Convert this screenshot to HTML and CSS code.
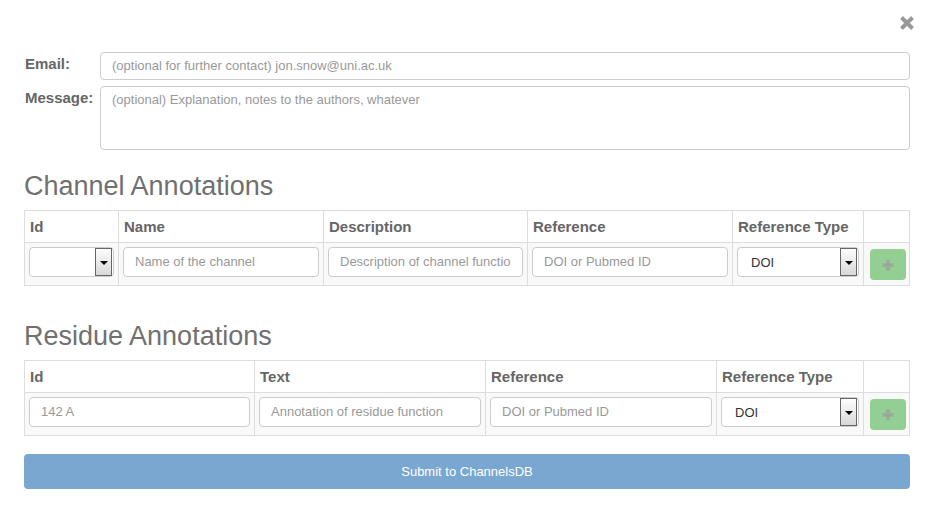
FILE: index.html
```html
<!DOCTYPE html>
<html>
<head>
<meta charset="utf-8">
<link rel="stylesheet" href="styles.css">
</head>
<body>
<div class="modal">
  <div class="top">
    <svg class="close" width="16" height="16" viewBox="0 0 16 16"><path d="M2.5 2.5 L13.5 13.5 M13.5 2.5 L2.5 13.5" stroke="#999" stroke-width="4" stroke-linecap="butt"/></svg>
  </div>
  <div class="form-row">
    <label class="lbl">Email:</label>
    <div class="input wide">(optional for further contact) jon.snow@uni.ac.uk</div>
  </div>
  <div class="form-row">
    <label class="lbl">Message:</label>
    <div class="input wide area">(optional) Explanation, notes to the authors, whatever</div>
  </div>

  <h3 class="heading first">Channel Annotations</h3>
  <table class="grid">
    <colgroup><col style="width:94px"><col style="width:205px"><col style="width:204px"><col style="width:205px"><col style="width:131px"><col></colgroup>
    <thead><tr><th>Id</th><th>Name</th><th>Description</th><th>Reference</th><th>Reference Type</th><th></th></tr></thead>
    <tbody><tr>
      <td><div class="select"><span class="val"></span><span class="arrow"></span></div></td>
      <td><div class="input">Name of the channel</div></td>
      <td><div class="input">Description of channel functio</div></td>
      <td><div class="input">DOI or Pubmed ID</div></td>
      <td><div class="select"><span class="val">DOI</span><span class="arrow"></span></div></td>
      <td class="btncell"><div class="plus"><svg width="12" height="12" viewBox="0 0 12 12"><path d="M6 0.5 V11.5 M0.5 6 H11.5" stroke="#9ca89c" stroke-width="3.5"/></svg></div></td>
    </tr></tbody>
  </table>

  <h3 class="heading">Residue Annotations</h3>
  <table class="grid">
    <colgroup><col style="width:230px"><col style="width:231px"><col style="width:231px"><col style="width:147px"><col></colgroup>
    <thead><tr><th>Id</th><th>Text</th><th>Reference</th><th>Reference Type</th><th></th></tr></thead>
    <tbody><tr>
      <td><div class="input">142 A</div></td>
      <td><div class="input">Annotation of residue function</div></td>
      <td><div class="input">DOI or Pubmed ID</div></td>
      <td><div class="select"><span class="val">DOI</span><span class="arrow"></span></div></td>
      <td class="btncell"><div class="plus"><svg width="12" height="12" viewBox="0 0 12 12"><path d="M6 0.5 V11.5 M0.5 6 H11.5" stroke="#9ca89c" stroke-width="3.5"/></svg></div></td>
    </tr></tbody>
  </table>

  <div class="submit">Submit to ChannelsDB</div>
</div>
</body>
</html>
```
FILE: styles.css
```css
html, body { margin: 0; padding: 0; background: #fff; }
body { font-family: "Liberation Sans", Arial, sans-serif; font-size: 13px; color: #333; }
.modal { padding: 0 24px 0 24px; width: 886px; }
.top { height: 52px; display: flex; justify-content: flex-end; align-items: flex-start; }
.close { margin-top: 15px; margin-right: -5px; }
.form-row { display: flex; align-items: flex-start; margin-bottom: 6px; }
.lbl { width: 75px; font-weight: bold; font-size: 15px; line-height: 20px; color: #666; padding-top: 2px; padding-left: 1px; }
.input { box-sizing: border-box; height: 30px; border: 1px solid #ccc; border-radius: 4px; padding: 0 11px; line-height: 28px; color: #999; white-space: nowrap; overflow: hidden; background: #fff; }
.wide { flex: 1; height: 28px; line-height: 26px; }
.area { height: 64px; padding-top: 3px; line-height: 20px; }
.heading { margin: 15px 0 9px 0; font-weight: normal; font-size: 27px; line-height: 30px; color: #707070; }
.heading.first { margin-top: 21px; }
.grid { width: 886px; border-collapse: collapse; table-layout: fixed; }
.grid th, .grid td { border: 1px solid #ddd; }
.grid th { text-align: left; font-size: 15px; line-height: 20px; font-weight: bold; color: #666; padding: 6px 5px 5px; }
.grid td { background: #f9f9f9; padding: 4px 4px 8px; vertical-align: top; }
.select { box-sizing: border-box; height: 30px; border: 1px solid #ccc; border-radius: 4px; background: #fff; display: flex; align-items: center; padding: 0 1px 0 13px; }
.select .val { flex: 1; color: #333; font-size: 13px; }
.select .arrow { width: 15px; height: 26px; border: 1px solid #666; background: linear-gradient(#fdfdfd, #d8d8d8); position: relative; }
.select .arrow::after { content: ""; position: absolute; left: 4px; top: 12px; border-left: 4px solid transparent; border-right: 4px solid transparent; border-top: 4px solid #000; }
.btncell { text-align: center; }
.grid td.btncell { padding: 5px 4px 5px 5px; }
.plus { width: 36px; height: 31px; margin: 1px 0 0 1px; background: #93cf93; border-radius: 4px; display: flex; align-items: center; justify-content: center; }
.grid + .heading { margin-top: 35px; }
.submit { margin-top: 18px; height: 35px; border-radius: 4px; background: #7aa7d0; color: #fff; text-align: center; line-height: 35px; font-size: 13px; }
```
